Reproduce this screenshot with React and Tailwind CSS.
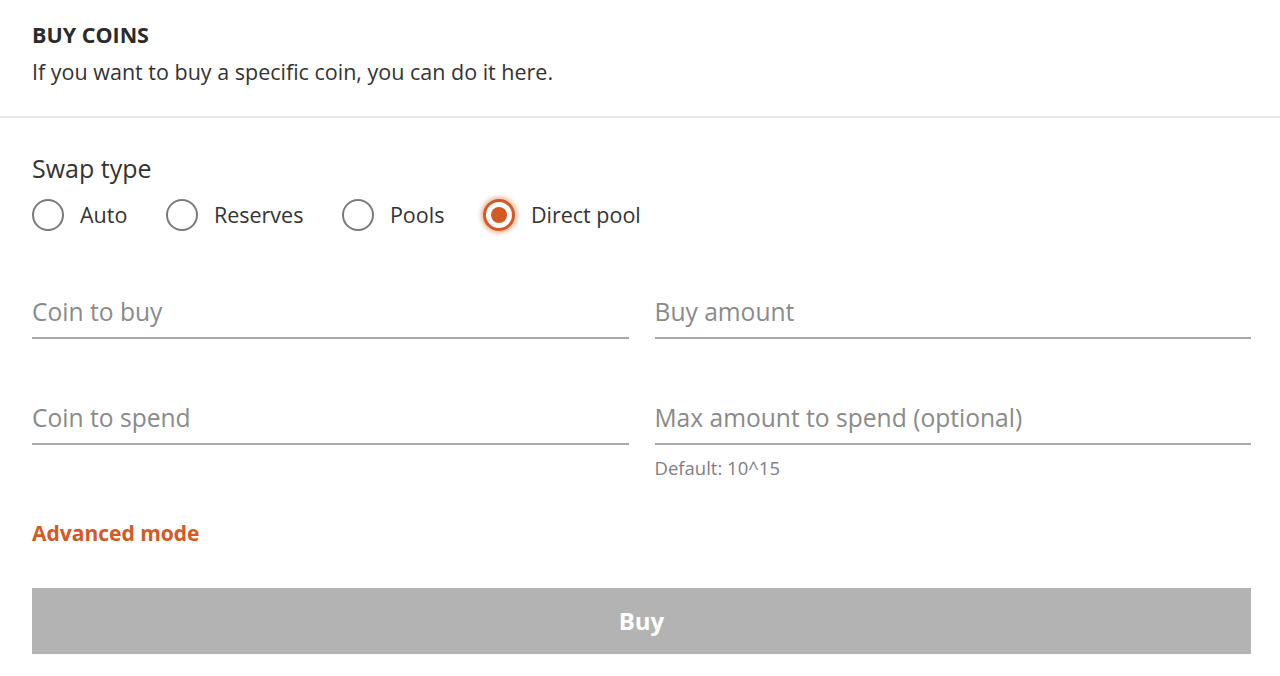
import React, { useState } from 'react';

const swapTypes = ['Auto', 'Reserves', 'Pools', 'Direct pool'];

const Field = ({ label, hint }) => (
  <div className="flex flex-col">
    <div className="h-[62px] flex items-end border-b-2 border-[#a8a8a8]">
      <input
        placeholder={label}
        className="w-full pb-[10px] bg-transparent outline-none text-[24.6px] text-[#444] placeholder:text-[#8a8a8a] leading-[30px]"
      />
    </div>
    {hint ? (
      <p className="mt-[12px] text-[18.5px] leading-[22px] text-[#808080]">{hint}</p>
    ) : null}
  </div>
);

const App = () => {
  const [swapType, setSwapType] = useState('Direct pool');

  return (
    <div className="min-h-screen bg-white text-[#333] font-['Open_Sans',sans-serif]">
      <header className="pl-[32px] pr-[29px] pt-[22px] pb-[31px] border-b-2 border-[#e8e8e8]">
        <h1 className="text-[21.5px] leading-[26px] font-bold text-[#2b2b2b]">BUY COINS</h1>
        <p className="mt-[11px] text-[21.5px] leading-[26px] text-[#333]">
          If you want to buy a specific coin, you can do it here.
        </p>
      </header>

      <main className="pl-[32px] pr-[29px] pt-[34px]">
        <h2 className="text-[25px] leading-[32px] text-[#333]">Swap type</h2>
        <div className="mt-[15px] flex items-center gap-[38.5px]">
          {swapTypes.map((t) => {
            const active = swapType === t;
            return (
              <label key={t} className="flex items-center gap-[16px] cursor-pointer">
                <button
                  type="button"
                  onClick={() => setSwapType(t)}
                  className={
                    active
                      ? 'w-[32px] h-[32px] rounded-full border-[3px] border-[#d35a22] bg-white flex items-center justify-center shadow-[0_0_4px_2px_rgba(211,90,34,0.45)]'
                      : 'w-[32px] h-[32px] rounded-full border-2 border-[#7a7a7a] bg-white'
                  }
                >
                  {active && <span className="w-[16px] h-[16px] rounded-full bg-[#d35a22]" />}
                </button>
                <span className="text-[21.5px] leading-[28px] text-[#333]">{t}</span>
              </label>
            );
          })}
        </div>

        <div className="mt-[46px] grid grid-cols-2 gap-x-[26px] gap-y-[44px]">
          <Field label="Coin to buy" />
          <Field label="Buy amount" />
          <Field label="Coin to spend" />
          <Field label="Max amount to spend (optional)" hint="Default: 10^15" />
        </div>

        <button type="button" className="mt-[40px] block text-[21px] leading-[28px] font-bold text-[#d35a22]">
          Advanced mode
        </button>

        <button
          type="button"
          disabled
          className="mt-[41px] w-full h-[66px] bg-[#b3b3b3] text-white text-[24px] font-bold"
        >
          Buy
        </button>
      </main>
    </div>
  );
};

export default App;
